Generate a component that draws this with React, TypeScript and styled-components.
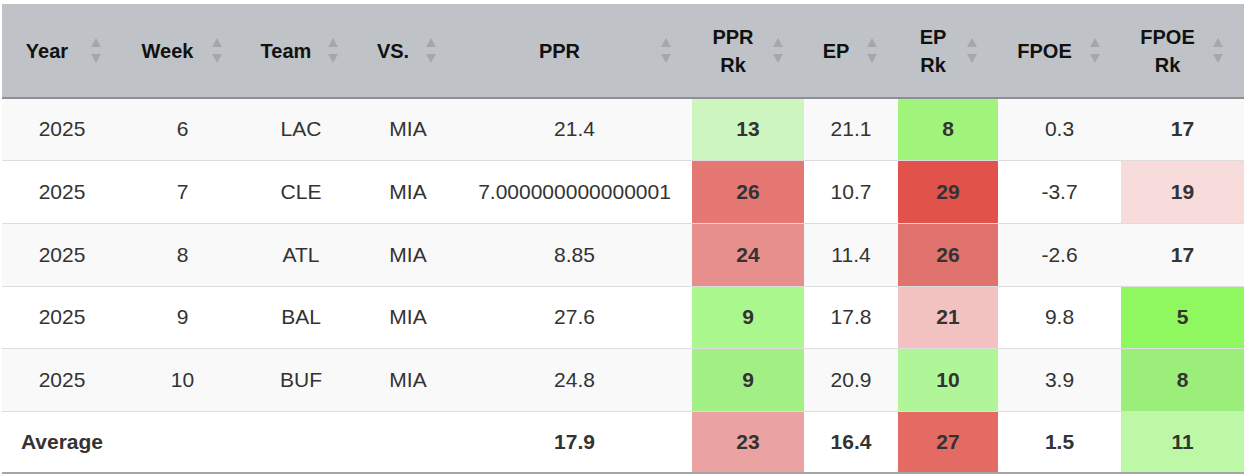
import React from 'react';
import styled, { createGlobalStyle } from 'styled-components';

type Row = {
  year: string;
  week: string;
  team: string;
  vs: string;
  ppr: string;
  pprRk: [string, string?];
  ep: string;
  epRk: [string, string?];
  fpoe: string;
  fpoeRk: [string, string?];
};

const rows: Row[] = [
  { year: '2025', week: '6', team: 'LAC', vs: 'MIA', ppr: '21.4', pprRk: ['13', '#ccf5bf'], ep: '21.1', epRk: ['8', '#a0f47c'], fpoe: '0.3', fpoeRk: ['17'] },
  { year: '2025', week: '7', team: 'CLE', vs: 'MIA', ppr: '7.000000000000001', pprRk: ['26', '#e67874'], ep: '10.7', epRk: ['29', '#e1534a'], fpoe: '-3.7', fpoeRk: ['19', '#f8dcdc'] },
  { year: '2025', week: '8', team: 'ATL', vs: 'MIA', ppr: '8.85', pprRk: ['24', '#e68f8c'], ep: '11.4', epRk: ['26', '#e1736e'], fpoe: '-2.6', fpoeRk: ['17'] },
  { year: '2025', week: '9', team: 'BAL', vs: 'MIA', ppr: '27.6', pprRk: ['9', '#aaf78d'], ep: '17.8', epRk: ['21', '#f2c2c1'], fpoe: '9.8', fpoeRk: ['5', '#90f85f'] },
  { year: '2025', week: '10', team: 'BUF', vs: 'MIA', ppr: '24.8', pprRk: ['9', '#a1ef85'], ep: '20.9', epRk: ['10', '#b0f597'], fpoe: '3.9', fpoeRk: ['8', '#9bee79'] },
];

const columns: { label: string[]; width: number }[] = [
  { label: ['Year'], width: 120 },
  { label: ['Week'], width: 121 },
  { label: ['Team'], width: 116 },
  { label: ['VS.'], width: 98 },
  { label: ['PPR'], width: 235 },
  { label: ['PPR', 'Rk'], width: 112 },
  { label: ['EP'], width: 94 },
  { label: ['EP', 'Rk'], width: 100 },
  { label: ['FPOE'], width: 123 },
  { label: ['FPOE', 'Rk'], width: 123 },
];

const GlobalStyle = createGlobalStyle`
  body {
    margin: 0;
    background: #ffffff;
    font-family: "Liberation Sans", Arial, sans-serif;
  }
`;

const SortIcon = () => (
  <IconBox>
    <svg width="10" height="26" viewBox="0 0 10 26">
      <polygon points="5,0 10,9 0,9" fill="#a4a8ac" />
      <polygon points="0,16 10,16 5,25" fill="#a4a8ac" />
    </svg>
  </IconBox>
);

const App = () => {
  return (
    <>
      <GlobalStyle />
      <Table>
        <colgroup>
          {columns.map((c, i) => (
            <col key={i} style={{ width: c.width }} />
          ))}
        </colgroup>
        <thead>
          <tr>
            {columns.map((c, i) => (
              <Th key={i}>
                <HeadInner>
                  <HeadLabel>
                    {c.label.map((l) => (
                      <span key={l}>{l}</span>
                    ))}
                  </HeadLabel>
                  <SortIcon />
                </HeadInner>
              </Th>
            ))}
          </tr>
        </thead>
        <tbody>
          {rows.map((r, i) => (
            <Tr key={i} striped={i % 2 === 0}>
              <Td>{r.year}</Td>
              <Td>{r.week}</Td>
              <Td>{r.team}</Td>
              <Td>{r.vs}</Td>
              <Td>{r.ppr}</Td>
              <Td bold bg={r.pprRk[1]}>{r.pprRk[0]}</Td>
              <Td>{r.ep}</Td>
              <Td bold bg={r.epRk[1]}>{r.epRk[0]}</Td>
              <Td>{r.fpoe}</Td>
              <Td bold bg={r.fpoeRk[1]}>{r.fpoeRk[0]}</Td>
            </Tr>
          ))}
          <Tr striped={false}>
            <Td bold>Average</Td>
            <Td />
            <Td />
            <Td />
            <Td bold>17.9</Td>
            <Td bold bg="#eaa3a2">23</Td>
            <Td bold>16.4</Td>
            <Td bold bg="#e46a64">27</Td>
            <Td bold>1.5</Td>
            <Td bold bg="#bdf8a6">11</Td>
          </Tr>
        </tbody>
      </Table>
    </>
  );
};

export default App;

const Table = styled.table`
  margin: 4px 0 0 2px;
  width: 1242px;
  table-layout: fixed;
  border-collapse: collapse;
  border-spacing: 0;
  border-bottom: 2px solid #a3a5a8;
`;

const Th = styled.th`
  height: 93px;
  padding: 0 0 0 8px;
  background: #bfc3c7;
  border-bottom: 2px solid #8c8f93;
  color: #111111;
  font-size: 20px;
  font-weight: bold;
  vertical-align: middle;
`;

const HeadInner = styled.div`
  display: flex;
  align-items: center;
`;

const HeadLabel = styled.div`
  flex: 1;
  display: flex;
  flex-direction: column;
  align-items: center;
  line-height: 28px;
  padding-right: 7px;
`;

const IconBox = styled.div`
  width: 10px;
  height: 26px;
  margin-right: 21px;
  display: flex;
`;

const Tr = styled.tr<{ striped: boolean }>`
  height: 62px;
  background: ${(p) => (p.striped ? '#f9f9f9' : '#ffffff')};

  &:nth-child(2),
  &:nth-child(3),
  &:nth-child(5) {
    height: 63px;
  }
`;

const Td = styled.td<{ bold?: boolean; bg?: string }>`
  padding: 0 8px;
  border-top: 1px solid #dddddd;
  text-align: center;
  vertical-align: middle;
  font-size: 21px;
  color: #333333;
  font-weight: ${(p) => (p.bold ? 'bold' : 'normal')};
  background: ${(p) => p.bg || 'transparent'};
  white-space: nowrap;
`;
